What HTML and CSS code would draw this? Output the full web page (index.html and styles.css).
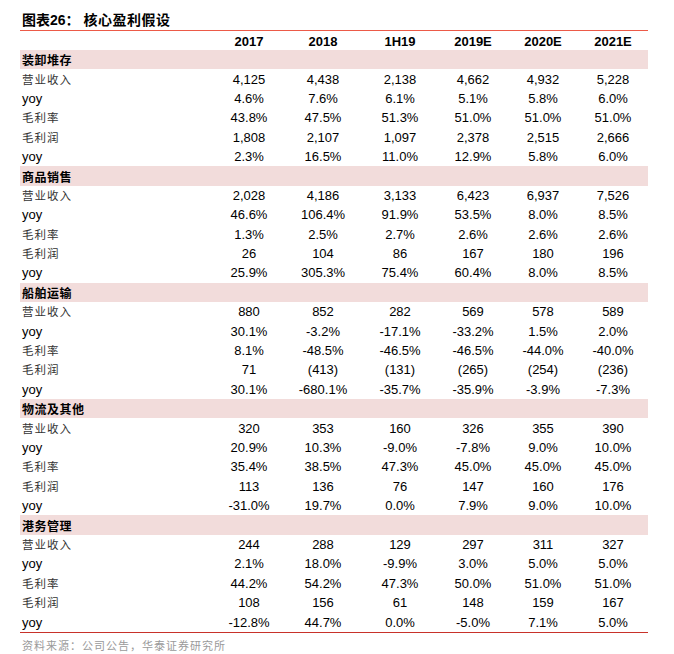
FILE: index.html
```html
<!DOCTYPE html>
<html lang="zh">
<head>
<meta charset="utf-8">
<link rel="stylesheet" href="styles.css">
</head>
<body>
<div class="page">
  <div class="title"><span class="fig">图表26：</span><span class="name">核心盈利假设</span></div>
  <table class="tbl">
    <colgroup>
      <col class="c-label"><col class="c70"><col class="c78"><col class="c76"><col class="c70"><col class="c70"><col class="c70">
    </colgroup>
    <thead>
      <tr class="head"><th></th><th>2017</th><th>2018</th><th>1H19</th><th>2019E</th><th>2020E</th><th>2021E</th></tr>
    </thead>
    <tbody>
      <tr class="sec"><td colspan="7">装卸堆存</td></tr>
      <tr><td class="cn">营业收入</td><td>4,125</td><td>4,438</td><td>2,138</td><td>4,662</td><td>4,932</td><td>5,228</td></tr>
      <tr><td class="en">yoy</td><td>4.6%</td><td>7.6%</td><td>6.1%</td><td>5.1%</td><td>5.8%</td><td>6.0%</td></tr>
      <tr><td class="cn">毛利率</td><td>43.8%</td><td>47.5%</td><td>51.3%</td><td>51.0%</td><td>51.0%</td><td>51.0%</td></tr>
      <tr><td class="cn">毛利润</td><td>1,808</td><td>2,107</td><td>1,097</td><td>2,378</td><td>2,515</td><td>2,666</td></tr>
      <tr><td class="en">yoy</td><td>2.3%</td><td>16.5%</td><td>11.0%</td><td>12.9%</td><td>5.8%</td><td>6.0%</td></tr>

      <tr class="sec"><td colspan="7">商品销售</td></tr>
      <tr><td class="cn">营业收入</td><td>2,028</td><td>4,186</td><td>3,133</td><td>6,423</td><td>6,937</td><td>7,526</td></tr>
      <tr><td class="en">yoy</td><td>46.6%</td><td>106.4%</td><td>91.9%</td><td>53.5%</td><td>8.0%</td><td>8.5%</td></tr>
      <tr><td class="cn">毛利率</td><td>1.3%</td><td>2.5%</td><td>2.7%</td><td>2.6%</td><td>2.6%</td><td>2.6%</td></tr>
      <tr><td class="cn">毛利润</td><td>26</td><td>104</td><td>86</td><td>167</td><td>180</td><td>196</td></tr>
      <tr><td class="en">yoy</td><td>25.9%</td><td>305.3%</td><td>75.4%</td><td>60.4%</td><td>8.0%</td><td>8.5%</td></tr>

      <tr class="sec"><td colspan="7">船舶运输</td></tr>
      <tr><td class="cn">营业收入</td><td>880</td><td>852</td><td>282</td><td>569</td><td>578</td><td>589</td></tr>
      <tr><td class="en">yoy</td><td>30.1%</td><td>-3.2%</td><td>-17.1%</td><td>-33.2%</td><td>1.5%</td><td>2.0%</td></tr>
      <tr><td class="cn">毛利率</td><td>8.1%</td><td>-48.5%</td><td>-46.5%</td><td>-46.5%</td><td>-44.0%</td><td>-40.0%</td></tr>
      <tr><td class="cn">毛利润</td><td>71</td><td>(413)</td><td>(131)</td><td>(265)</td><td>(254)</td><td>(236)</td></tr>
      <tr><td class="en">yoy</td><td>30.1%</td><td>-680.1%</td><td>-35.7%</td><td>-35.9%</td><td>-3.9%</td><td>-7.3%</td></tr>

      <tr class="sec"><td colspan="7">物流及其他</td></tr>
      <tr><td class="cn">营业收入</td><td>320</td><td>353</td><td>160</td><td>326</td><td>355</td><td>390</td></tr>
      <tr><td class="en">yoy</td><td>20.9%</td><td>10.3%</td><td>-9.0%</td><td>-7.8%</td><td>9.0%</td><td>10.0%</td></tr>
      <tr><td class="cn">毛利率</td><td>35.4%</td><td>38.5%</td><td>47.3%</td><td>45.0%</td><td>45.0%</td><td>45.0%</td></tr>
      <tr><td class="cn">毛利润</td><td>113</td><td>136</td><td>76</td><td>147</td><td>160</td><td>176</td></tr>
      <tr><td class="en">yoy</td><td>-31.0%</td><td>19.7%</td><td>0.0%</td><td>7.9%</td><td>9.0%</td><td>10.0%</td></tr>

      <tr class="sec"><td colspan="7">港务管理</td></tr>
      <tr><td class="cn">营业收入</td><td>244</td><td>288</td><td>129</td><td>297</td><td>311</td><td>327</td></tr>
      <tr><td class="en">yoy</td><td>2.1%</td><td>18.0%</td><td>-9.9%</td><td>3.0%</td><td>5.0%</td><td>5.0%</td></tr>
      <tr><td class="cn">毛利率</td><td>44.2%</td><td>54.2%</td><td>47.3%</td><td>50.0%</td><td>51.0%</td><td>51.0%</td></tr>
      <tr><td class="cn">毛利润</td><td>108</td><td>156</td><td>61</td><td>148</td><td>159</td><td>167</td></tr>
      <tr class="last"><td class="en">yoy</td><td>-12.8%</td><td>44.7%</td><td>0.0%</td><td>-5.0%</td><td>7.1%</td><td>5.0%</td></tr>
    </tbody>
  </table>
  <div class="source">资料来源：公司公告，华泰证券研究所</div>
</div>
</body>
</html>
```

FILE: styles.css
```css
html, body {
  margin: 0;
  padding: 0;
  background: #fff;
}
.page {
  padding: 10px 26px 0 20px;
  width: 628px;
  font-family: "Liberation Sans", Arial, "Noto Sans CJK SC", sans-serif;
  color: #000;
}
.title {
  height: 20px;
  line-height: 20px;
  font-size: 14px;
  font-weight: bold;
  padding-left: 2px;
  border-bottom: 1.5px solid #ec5a48;
  font-family: "Liberation Sans", "Noto Sans CJK SC", sans-serif;
}
.title .fig {
  margin-right: 4px;
}
.title .name {
  letter-spacing: 0.5px;
}
.tbl {
  width: 628px;
  table-layout: fixed;
  border-collapse: collapse;
  border-spacing: 0;
  border-bottom: 1px solid #c8322a;
}
.c-label { width: 194px; }
.c70 { width: 70px; }
.c78 { width: 78px; }
.c76 { width: 76px; }
.tbl th, .tbl td {
  padding: 0;
  text-align: center;
  font-size: 13px;
  white-space: nowrap;
  overflow: hidden;
}
.tbl th {
  height: 19px;
  padding-top: 3px;
  box-sizing: border-box;
  font-weight: bold;
  line-height: 16px;
}
.tbl td {
  height: 19.4px;
  line-height: 19px;
}
.tbl tr.sec td {
  background: #f2dcdb;
  text-align: left;
  padding-left: 2px;
  font-family: "Noto Sans CJK SC", sans-serif;
  font-weight: bold;
  font-size: 12px;
  letter-spacing: 0.5px;
}
.tbl td.cn {
  text-align: left;
  padding-left: 2px;
  font-family: "Noto Sans CJK SC", sans-serif;
  font-size: 11.5px;
  letter-spacing: 1px;
  color: #333;
}
.tbl td.en {
  text-align: left;
  padding-left: 2px;
}
.source {
  margin-top: 5px;
  padding-left: 2px;
  font-family: "Noto Sans CJK SC", sans-serif;
  font-size: 11px;
  line-height: 14px;
  letter-spacing: 1px;
  color: #9a9a9a;
}
```
